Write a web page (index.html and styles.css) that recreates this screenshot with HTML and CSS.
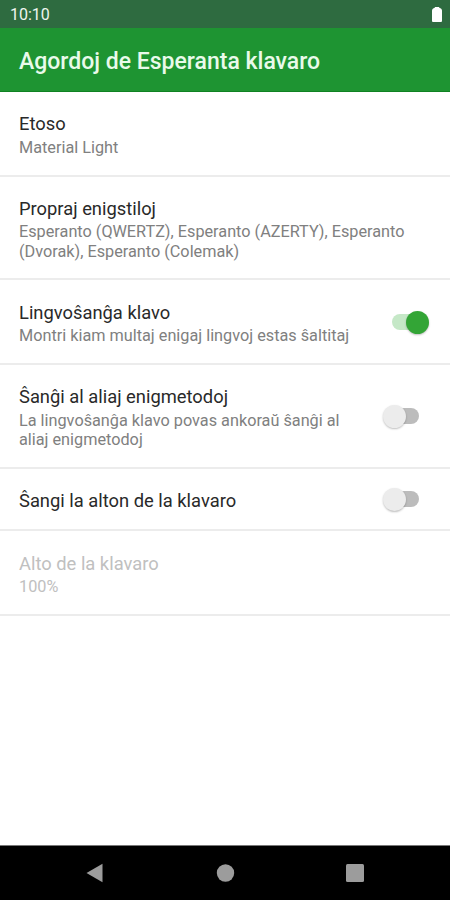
FILE: index.html
```html
<!DOCTYPE html>
<html lang="eo">
<head>
<meta charset="utf-8">
<title>Agordoj de Esperanta klavaro</title>
<link rel="stylesheet" href="styles.css">
</head>
<body>
<div class="status"><span>10:10</span>
<svg class="battery" width="10" height="15" viewBox="0 0 10 15"><path d="M3 0h4l.5 1H8q2 .5 2 2.500v10.500q0 1-1 1H1q-1 0-1-1V3.500Q0 1.500 2 1h.5z" fill="#fff"/></svg></div>
<header class="bar"><h1 class="heading">Agordoj de Esperanta klavaro</h1></header>
<main class="list">
<section class="item theme"><div class="copy"><h2>Etoso</h2><p>Material Light</p></div></section>
<section class="item styles"><div class="copy"><h2>Propraj enigstiloj</h2><p>Esperanto (QWERTZ), Esperanto (AZERTY), Esperanto<br>(Dvorak), Esperanto (Colemak)</p></div></section>
<section class="item lang"><div class="copy"><h2>Lingvoŝanĝa klavo</h2><p>Montri kiam multaj enigaj lingvoj estas ŝaltitaj</p></div><div class="switch on"><i class="thumb"></i></div></section>
<section class="item methods"><div class="copy"><h2>Ŝanĝi al aliaj enigmetodoj</h2><p>La lingvoŝanĝa klavo povas ankoraŭ ŝanĝi al<br>aliaj enigmetodoj</p></div><div class="switch"><i class="thumb"></i></div></section>
<section class="item resize"><div class="copy"><h2>Ŝangi la alton de la klavaro</h2></div><div class="switch"><i class="thumb"></i></div></section>
<section class="item height disabled"><div class="copy"><h2>Alto de la klavaro</h2><p>100%</p></div></section>
</main>
<nav class="nav">
<svg width="20" height="20" viewBox="0 0 20 20"><path d="M17.500.8v18.400L1.500 10z"/></svg>
<svg width="20" height="20" viewBox="0 0 20 20"><circle cx="10.500" cy="10" r="8.700"/></svg>
<svg width="20" height="20" viewBox="0 0 20 20"><rect x="1" y="1" width="18" height="18" rx="1.500"/></svg>
</nav>
</body>
</html>
```
FILE: styles.css
```css
* { box-sizing: border-box; }
body { margin: 0; width: 450px; height: 900px; display: flex; flex-direction: column; background: #fff; color: #292929; font-family: Roboto, sans-serif; }
.status { height: 28px; flex: none; background: #2e6b40; color: #eef5ef; display: flex; justify-content: space-between; align-items: center; padding: 1px 8px 0 10px; font-size: 16px; }
.bar { height: 64px; flex: none; background: #1e9432; border-bottom: 1px solid #108222; color: #e9faea; display: flex; align-items: center; padding: 3px 19px 0; }
.heading { margin: 0; font-size: 23px; font-weight: 500; white-space: nowrap; }
.list { flex: 1; }
.item { display: flex; justify-content: space-between; border-bottom: 2px solid #ececec; padding: 20px 21px 0 19px; }
.copy { white-space: nowrap; }
h2 { margin: 0; font-size: 18.35px; line-height: 24px; font-weight: 400; }
p { margin: 2px 0 0; font-size: 16.25px; line-height: 19px; color: #808080; }
.theme { height: 85px; }
.styles { height: 103px; }
.styles p { margin-top: 1px; line-height: 20px; }
.lang { height: 85px; padding-top: 21px; }
.lang p, .height p { margin-top: 1px; }
.methods { height: 104px; }
.resize { height: 62px; }
.height { height: 85px; padding-top: 21px; }
.disabled h2, .disabled p { color: #c0c0c0; }
.switch { width: 47px; height: 24px; display: flex; align-items: center; flex: none; }
.switch::before { content: ""; width: 28px; height: 16px; margin-left: 9px; border-radius: 8px; background: #bcbcbc; flex: none; }
.thumb { width: 23px; height: 23px; flex: none; margin-left: -36.5px; border-radius: 50%; background: #ececec; box-shadow: 0 1px 2px rgba(0, 0, 0, .25); }
.on::before { background: #c5e8c7; margin-left: 10px; }
.on .thumb { margin-left: -14.5px; background: #33a536; }
.lang .switch { margin-top: 9px; }
.methods .switch { margin-top: 19px; }
.resize .switch { margin-top: -2px; }
.nav { height: 55px; margin-top: -1px; flex: none; background: #000; border-top: 1px solid #777; display: flex; justify-content: center; align-items: center; gap: 110px; fill: #9c9c9c; }
```
